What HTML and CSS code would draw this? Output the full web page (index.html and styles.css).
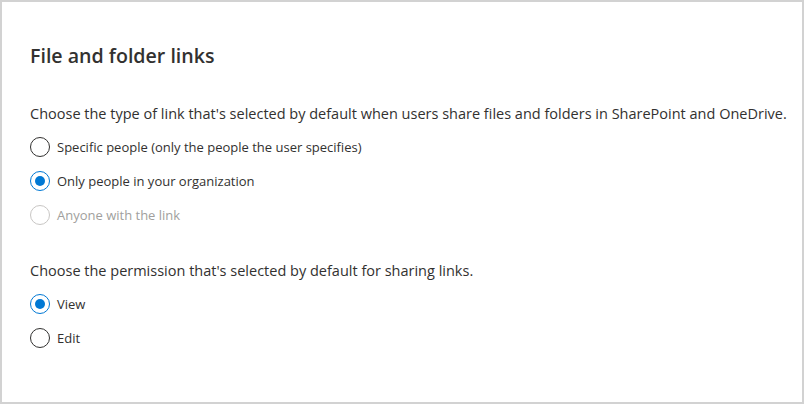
FILE: index.html
```html
<!DOCTYPE html>
<html lang="en">
<head>
    <meta charset="UTF-8">
    <title>Sharing - File and folder links</title>
    <link rel="stylesheet" href="styles.css">
</head>
<body>
    <div class="panel">
        <h2 class="panel-title">File and folder links</h2>

        <p class="question">Choose the type of link that's selected by default when users share files and folders in SharePoint and OneDrive.</p>
        <div class="choice-group">
            <label class="choice">
                <input type="radio" name="linkType">
                <span class="radio"></span>
                <span class="choice-label">Specific people (only the people the user specifies)</span>
            </label>
            <label class="choice">
                <input type="radio" name="linkType" checked>
                <span class="radio"></span>
                <span class="choice-label">Only people in your organization</span>
            </label>
            <label class="choice">
                <input type="radio" name="linkType" disabled>
                <span class="radio"></span>
                <span class="choice-label">Anyone with the link</span>
            </label>
        </div>

        <p class="question second">Choose the permission that's selected by default for sharing links.</p>
        <div class="choice-group">
            <label class="choice">
                <input type="radio" name="permission" checked>
                <span class="radio"></span>
                <span class="choice-label">View</span>
            </label>
            <label class="choice">
                <input type="radio" name="permission">
                <span class="radio"></span>
                <span class="choice-label">Edit</span>
            </label>
        </div>
    </div>
</body>
</html>
```

FILE: styles.css
```css
html, body {
    height: 100%;
}

body {
    font-family: 'Open Sans', 'Noto Sans', sans-serif;
    margin: 0;
    padding: 0;
    background-color: #fff;
    color: #323130;
}

.panel {
    box-sizing: border-box;
    height: 100%;
    border: 2px solid #d2d2d2;
    padding: 40px 8px 0 28px;
}

.panel-title {
    margin: 0;
    font-size: 19.6px;
    font-weight: 600;
    line-height: 28px;
}

.question {
    margin: 34px 0 0 0;
    font-size: 14.5px;
    line-height: 20px;
    white-space: nowrap;
}

.question.second {
    margin-top: 36px;
}

.choice-group {
    display: flex;
    flex-direction: column;
    gap: 14px;
    margin-top: 13px;
}

.choice {
    display: flex;
    align-items: center;
    gap: 7px;
    height: 20px;
    font-size: 13px;
    cursor: pointer;
}

.choice input {
    display: none;
}

.radio {
    box-sizing: border-box;
    width: 20px;
    height: 20px;
    border: 1px solid #323130;
    border-radius: 50%;
    display: flex;
    align-items: center;
    justify-content: center;
    flex-shrink: 0;
}

.choice input:checked + .radio {
    border-color: #0078d4;
}

.choice input:checked + .radio::after {
    content: "";
    width: 10px;
    height: 10px;
    border-radius: 50%;
    background-color: #0078d4;
}

.choice input:disabled + .radio {
    border-color: #c8c6c4;
}

.choice input:disabled ~ .choice-label {
    color: #a19f9d;
}
```
